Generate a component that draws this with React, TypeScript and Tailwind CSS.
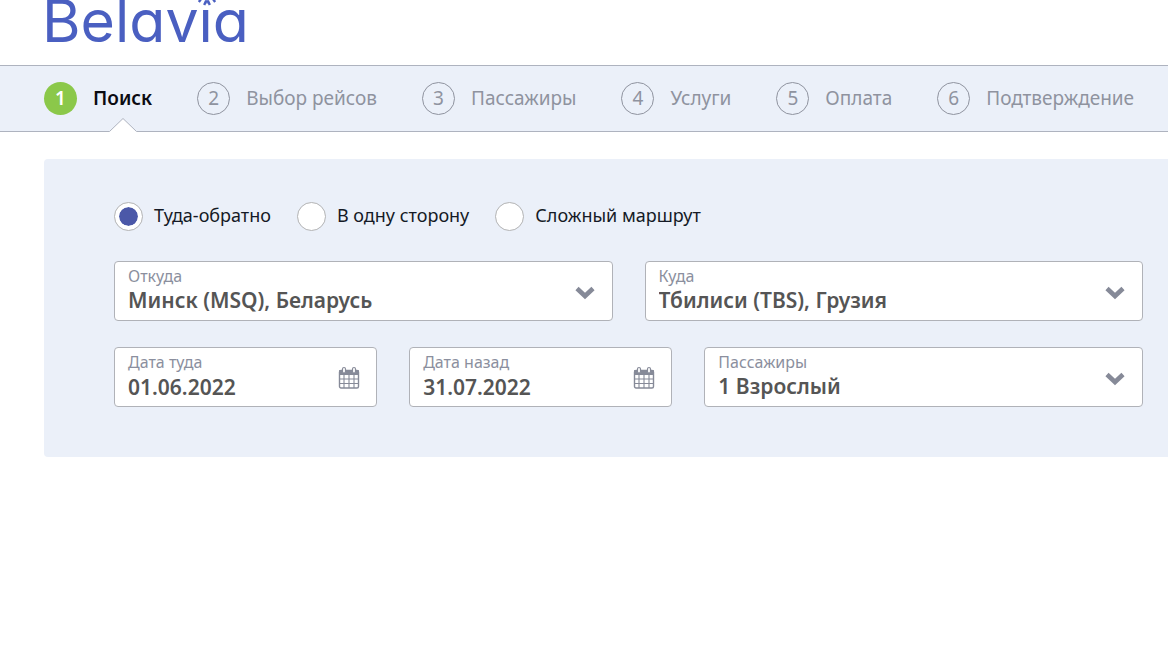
import React, { useState } from "react"

const steps = [
    'Поиск',
    'Выбор рейсов',
    'Пассажиры',
    'Услуги',
    'Оплата',
    'Подтверждение',
]

const routes = ['Туда-обратно', 'В одну сторону', 'Сложный маршрут']

const fieldStyle = "h-[60px] w-full appearance-none rounded border border-[#b0b2b8] bg-white pt-[19px] pl-[13px] text-[21px] font-semibold text-[#555555]"

// takes the place of the dot over the "i"
const Snowflake: React.FC = () => (
    <svg viewBox="-12 -12 24 24" className="absolute top-[-18px] left-[153px] size-6" fill="none" stroke="#4a5fc1" aria-hidden="true">
        <circle r="11.5" fill="#fff" stroke="none" />
        {[0, 60, 120, 180, 240, 300].map((angle) => (
            <g key={angle} transform={`rotate(${angle})`}>
                <path d="M0 2V9.5" strokeWidth="1.4" />
                <path d="M-0.8 6.5L-2.8 11M0.8 6.5L2.8 11" strokeWidth="2.4" />
            </g>
        ))}
    </svg>
)

const Chevron: React.FC = () => (
    <svg viewBox="0 0 20 14" className="pointer-events-none absolute top-[25px] right-[18px] h-[14px] w-5" fill="none" stroke="#868a98" strokeWidth="4.6" aria-hidden="true">
        <path d="M2 2.5L10 10L18 2.5" />
    </svg>
)

const Calendar: React.FC = () => (
    <svg viewBox="0 0 22 24" className="pointer-events-none absolute top-[19px] right-[17px] h-6 w-[22px]" fill="none" stroke="#868a98" aria-hidden="true">
        <rect x="1.5" y="4.5" width="19" height="17.5" rx="1.5" strokeWidth="1.4" />
        <path d="M1.5 4.5h19v4h-19z" fill="#868a98" />
        <path d="M6 8.5V22M11 8.5V22M16 8.5V22M1.5 13H20.5M1.5 17.5H20.5" strokeWidth="1.1" />
        <rect x="4.5" y="1.5" width="3" height="5.5" rx="1.5" fill="#fff" strokeWidth="1.2" />
        <rect x="14.5" y="1.5" width="3" height="5.5" rx="1.5" fill="#fff" strokeWidth="1.2" />
    </svg>
)

type FieldProps = {
    id: string
    label: string
    children: React.ReactNode
}

const Field: React.FC<FieldProps> = ({ id, label, children }) => (
    <div className="relative">
        <label htmlFor={id} className="pointer-events-none absolute top-[5px] left-[14px] text-base leading-5 text-[#8b8f9e]">
            {label}
        </label>
        {children}
    </div>
)

const App: React.FC = () => {
    const [route, setRoute] = useState(routes[0])
    const [dateTo, setDateTo] = useState('01.06.2022')
    const [dateBack, setDateBack] = useState('31.07.2022')

    return (
        <div className="min-h-screen overflow-x-hidden bg-white font-['Noto_Sans','Open_Sans',sans-serif]">
            <header className="flex pb-[23px] pl-[42px]">
                <a href="#" className="relative font-['Inter',sans-serif] text-[59px] leading-[42px] text-[#4a5fc1] [font-feature-settings:'cv11']">
                    Belavia
                    <Snowflake />
                </a>
            </header>

            <nav className="border-y border-[#aeb3bf] bg-[#ebf0f9]">
                <ol className="flex h-[65px] items-center gap-[45px] pl-11 text-[19px] whitespace-nowrap">
                    {steps.map((step, i) => (
                        <li key={step} className="flex h-full items-center gap-4">
                            {i === 0 ? (
                                <>
                                    <span className="flex size-[33px] items-center justify-center rounded-full bg-[#8bc84a] font-semibold text-white">{i + 1}</span>
                                    <a href="#" className="relative flex h-full items-center font-semibold text-[#0b0b12]">
                                        {step}
                                        <svg viewBox="0 0 28 14" className="absolute -bottom-px left-1/2 h-[14px] w-7 -translate-x-1/2" aria-hidden="true">
                                            <path d="M0 14L14 0.5L28 14Z" fill="#fff" />
                                            <path d="M0.5 13.5L14 0.5L27.5 13.5" fill="none" stroke="#aeb3bf" />
                                        </svg>
                                    </a>
                                </>
                            ) : (
                                <>
                                    <span className="flex size-[33px] items-center justify-center rounded-full border border-[#8f939f] text-[#8f939f]">{i + 1}</span>
                                    <span className="text-[#8f939f]">{step}</span>
                                </>
                            )}
                        </li>
                    ))}
                </ol>
            </nav>

            <main className="pt-[27px] pl-11">
                <form className="rounded-l bg-[#ebf0f9] pt-[43px] pr-[25px] pb-[50px] pl-[70px]">
                    <div className="flex gap-[26px] text-lg text-[#151a26]">
                        {routes.map((name) => (
                            <label key={name} className="flex gap-[11px] leading-[26px]">
                                <input
                                    type="radio"
                                    name="route"
                                    checked={route === name}
                                    onChange={() => setRoute(name)}
                                    className="size-[29px] appearance-none rounded-full border border-[#b5b5b5] bg-white bg-clip-content p-[4px] shadow-[inset_0_0_0_14px_white] checked:bg-[#4b58a8] checked:shadow-[inset_0_0_0_4px_white]"
                                />
                                {name}
                            </label>
                        ))}
                    </div>

                    <div className="mt-[30px] grid grid-cols-2 gap-8">
                        <Field id="from" label="Откуда">
                            <select id="from" className={fieldStyle}>
                                <option>Минск (MSQ), Беларусь</option>
                            </select>
                            <Chevron />
                        </Field>
                        <Field id="to" label="Куда">
                            <select id="to" className={fieldStyle}>
                                <option>Тбилиси (TBS), Грузия</option>
                            </select>
                            <Chevron />
                        </Field>
                    </div>

                    <div className="mt-[26px] grid grid-cols-[3fr_3fr_5fr] gap-8">
                        <Field id="dateTo" label="Дата туда">
                            <input id="dateTo" type="text" value={dateTo} onChange={(e) => setDateTo(e.target.value)} className={fieldStyle} />
                            <Calendar />
                        </Field>
                        <Field id="dateBack" label="Дата назад">
                            <input id="dateBack" type="text" value={dateBack} onChange={(e) => setDateBack(e.target.value)} className={fieldStyle} />
                            <Calendar />
                        </Field>
                        <Field id="passengers" label="Пассажиры">
                            <select id="passengers" className={fieldStyle}>
                                <option>1 Взрослый</option>
                            </select>
                            <Chevron />
                        </Field>
                    </div>
                </form>
            </main>
        </div>
    )
}

export default App
